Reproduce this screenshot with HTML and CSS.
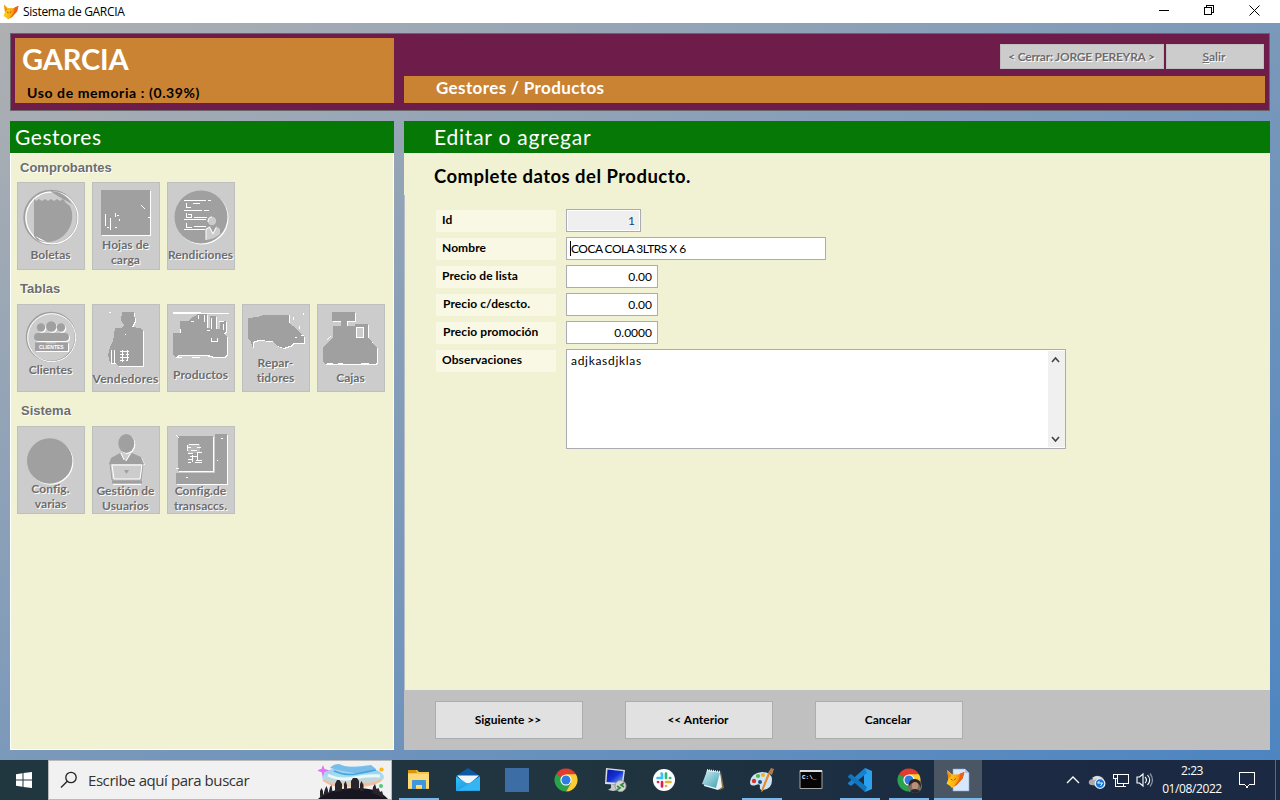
FILE: index.html
```html
<!DOCTYPE html>
<html lang="es">
<head>
<meta charset="utf-8">
<title>Sistema de GARCIA</title>
<link rel="stylesheet" href="styles.css">
</head>
<body>
<svg class="defs" width="0" height="0">
  <defs>
    <linearGradient id="foxg" x1="0" y1="0" x2="1" y2="0"><stop offset="0" stop-color="#ffd21a"/><stop offset=".55" stop-color="#fba90f"/><stop offset="1" stop-color="#e5571e"/></linearGradient>
    <linearGradient id="mailg" x1="0" y1="0" x2="1" y2="1"><stop offset="0" stop-color="#2fc3f5"/><stop offset="1" stop-color="#1a86dc"/></linearGradient>
    <linearGradient id="scr" x1="0" y1="0" x2="1" y2="1"><stop offset="0" stop-color="#0a16a0"/><stop offset=".5" stop-color="#1430d8"/><stop offset="1" stop-color="#7db4f5"/></linearGradient>
    <linearGradient id="note" x1="0" y1="0" x2="1" y2="1"><stop offset="0" stop-color="#cfeef2"/><stop offset="1" stop-color="#3e9fb2"/></linearGradient>
    <linearGradient id="sky" x1="0" y1="0" x2="0" y2="1"><stop offset="0" stop-color="#8cc9ee"/><stop offset=".45" stop-color="#a8dcf2"/><stop offset="1" stop-color="#f6c8a2"/></linearGradient>
    <symbol id="fox" viewBox="0 0 16 16"><path d="M1 .5 5 4l5 .2L15.500 2 14 7.500 9 13l-4 2.500-2-2L.5 12 2 8z" fill="url(#foxg)"/><path d="m12 3.300 3.500-1.300L14 7.500 9 13l-2.500 1.500 4.500-6z" fill="#e8601c"/><path d="m1 .5 3.500 5L2 8z" fill="#f08b12"/><path d="m4 8 1.500 1M8 7.500l-1 1.500" stroke="#91500a" stroke-width=".8"/></symbol>
    <symbol id="chrome" viewBox="0 0 24 24"><path d="M12 12 2.040 6.250A11.500 11.500 0 0 1 21.960 6.250z" fill="#e33b2e"/><path d="M2.040 6.250A11.500 11.500 0 0 0 12 23.500l5-8.600L12 12z" fill="#2ba24c"/><path d="M21.960 6.250A11.500 11.500 0 0 1 12 23.500l5-8.600L12 6.250z" fill="#fccd32"/><path d="M7 14.900 2.040 6.250 12 12z" fill="#2ba24c"/><circle cx="12" cy="12" r="5.600" fill="#fff"/><circle cx="12" cy="12" r="4.500" fill="#2f7de1"/></symbol>
  </defs>
</svg>

<header class="titlebar">
  <svg class="app-icon" width="16" height="16"><use href="#fox"/></svg>
  <span class="window-title">Sistema de GARCIA</span>
  <svg class="window-controls" width="120" height="23" viewBox="0 0 120 23" fill="none" stroke="#000" shape-rendering="crispEdges"><path d="M9 10.500h10"/><path d="M54.500 7.500h7v7h-7zM56.500 7V5.500h7v7H62"/><path d="m99.500 5.500 10 10m0-10-10 10" shape-rendering="auto"/></svg>
</header>

<main class="desktop">
  <section class="topbox">
    <div class="brand">
      <h1 class="brand-name">GARCIA</h1>
      <p class="brand-memory">Uso de memoria : (0.39%)</p>
    </div>
    <div class="top-right">
      <div class="session">
        <button class="gray-btn close-btn"><span>&lt; Cerrar: JORGE PEREYRA &gt;</span></button>
        <button class="gray-btn exit-btn"><span><u>S</u>alir</span></button>
      </div>
      <div class="crumb"><span>Gestores / Productos</span></div>
    </div>
  </section>

  <div class="columns">
    <aside class="sidebar">
      <h2 class="green-head side-head"><span>Gestores</span></h2>
      <div class="side-body">
        <h3 class="group-title"><span>Comprobantes</span></h3>
        <div class="tiles">
          <button class="tile"><svg class="tile-icon" viewBox="0 0 68 88"><circle cx="34" cy="35.500" r="26.800" fill="none" stroke="#a0a0a0" stroke-width="1.800"/><circle cx="35" cy="35.800" r="26" fill="none" stroke="#fff" stroke-width="1.300"/><path d="M17 17l2 2 3-2 3 2 3-2 3 2 3-2 3 2 3-2 3 2 3-2 3 4 4 3a25.500 25.500 0 0 1-33 34L17 54z" fill="#a0a0a0"/><path d="M33 9q14 0 22 13L44 16z" fill="#a0a0a0"/><path d="m18 54 12 6-7-2z" fill="#fff"/></svg><span class="tile-label y-66">Boletas</span></button>
          <button class="tile"><svg class="tile-icon" viewBox="0 0 68 88" shape-rendering="crispEdges"><path class="emb" d="M9 8h49v45H9z"/><path d="M13.500 32v12M18.500 36v12M23.500 31v4M27.500 37v2M15 45.500h2m6 0h2m0-12h2M49 23l4 4M56 35.500h3M14 53.500h5" stroke="#fff"/></svg><span class="tile-label y-56">Hojas de<br>carga</span></button>
          <button class="tile"><svg class="tile-icon" viewBox="0 0 68 88"><circle class="emb" cx="34" cy="35" r="26.500"/><path d="M17 18.500h22m2 0h3M17 28.500h18m2 0h5M17 37.500h22M17 47.500h21M19.500 21v4h4M26 21.500h7M19.500 31v4h5v-3h-4M19.500 41v4h5M27 35.500h13M27 44.500h12" stroke="#fff" fill="none" shape-rendering="crispEdges"/><circle cx="45" cy="39" r="4.200" fill="#ccc"/><path d="M39 58V47l4-3 3 7 3-7 4 3v5q-5 5-14 6" fill="#ccc"/><path d="M39 58V47l4-2m0 1 3 6 3-6M41 40q0-5 4-5" fill="none" stroke="#fff"/></svg><span class="tile-label y-66">Rendiciones</span></button>
        </div>
        <h3 class="group-title next"><span>Tablas</span></h3>
        <div class="tiles">
          <button class="tile"><svg class="tile-icon" viewBox="0 0 68 88"><circle cx="34" cy="33" r="24.500" fill="none" stroke="#a0a0a0" stroke-width="1.500"/><circle cx="34.700" cy="33.700" r="24" fill="none" stroke="#fff"/><g class="emb"><circle cx="24" cy="23.500" r="4.200"/><circle cx="34.300" cy="22.500" r="5.200"/><circle cx="44" cy="23.500" r="4.200"/><rect x="17" y="29" width="35" height="8" rx="4"/><path d="M18 38.500h10l2 1h8l2-1h11V47H18z"/></g><text x="34.300" y="45" class="mini">CLIENTES</text></svg><span class="tile-label y-59">Clientes</span></button>
          <button class="tile"><svg class="tile-icon" viewBox="0 0 68 88" shape-rendering="crispEdges"><path class="emb" d="M30 8h12l1 9-3 6 8 1 3 3v35H27l-4-3h-5l-2-8 2-8 3-6 2-13h6l3-3-3-5z"/><path d="M19.500 59V46m3 14V46M28 47.500h9m-9 3h4m2 0h3m-9 3h9m-9 3h4m2 0h2M30.500 46v12m5-12v10M17 8.500h2M33 30.500h1" stroke="#fff"/></svg><span class="tile-label vend y-68">Vendedores</span></button>
          <button class="tile"><svg class="tile-icon" viewBox="0 0 68 88" shape-rendering="crispEdges"><path d="M6 9.500h56M6 8.500h28" stroke="#fff"/><path class="emb" d="M6 29h7V17h8l3-3 4-2 3-2h9v14h3V12h6v13h4v-8h6v10l-2 3 3 3v18l-3 2H45l-3-2H12l-3 2-3-2z"/><path d="M24 17h3m4-6v4m6-4v7m7-4v11m8-8h5M44 34v3h6v-3M13 25v4M9 53.500h6m10 0h8m8-1h5M56 20v6m-16 0h3" fill="none" stroke="#fff"/></svg><span class="tile-label y-64">Productos</span></button>
          <button class="tile"><svg class="tile-icon" viewBox="0 0 68 88" shape-rendering="crispEdges"><path class="emb" d="m6 14 10-1 5-2h26v8l4 3 5 5 6 6v6H51l-3 3-7 2-5-2-6-5-14-1-5 2v7l-2-7-3-3z"/><path d="M51 13v3M61.500 9v2M47.500 11v8M57 22v3m-4 8h2M59 31h3" stroke="#fff"/></svg><span class="tile-label y-52">Repar-<br>tidores</span></button>
          <button class="tile"><svg class="tile-icon" viewBox="0 0 68 88" shape-rendering="crispEdges"><path class="emb" d="M15 8h23v9h-8v5h8v-2h13v13l9 11v14l-2 2H8l-2-3V43l10-10V22h8v-5h-9z"/><path d="M39.500 23.500h7v10h-7z" fill="#ccc" stroke="#fff"/><path d="M10 36l4-4M10 59.500h6m5 0h5m18 0h8" stroke="#fff"/></svg><span class="tile-label y-67">Cajas</span></button>
        </div>
        <h3 class="group-title next sys"><span>Sistema</span></h3>
        <div class="tiles">
          <button class="tile"><svg class="tile-icon" viewBox="0 0 68 88"><circle class="emb" cx="32.700" cy="35" r="22.700"/></svg><span class="tile-label y-56">Config.<br>varias</span></button>
          <button class="tile"><svg class="tile-icon" viewBox="0 0 68 88"><g class="emb"><ellipse cx="34.300" cy="17.500" rx="8" ry="9.500"/><path d="m17 38 2-6 9-5 6 8 6-8 9 4 3 7z"/></g><path d="m29 27 3 7m6-6-4 7" stroke="#fff" fill="none"/><path d="M18 37.500h33L49 54H20z" fill="#ccc" stroke="#a0a0a0"/><path d="M20 39h30l-2 14H22z" fill="none" stroke="#fff"/><path d="M20 54.500h30v3H20z" fill="#a0a0a0"/><path d="M21 58.500h28" stroke="#fff"/><path d="M32 44h5l-2.500 4z" fill="#a0a0a0"/></svg><span class="tile-label y-58">Gestión de<br>Usuarios</span></button>
          <button class="tile"><svg class="tile-icon" viewBox="0 0 68 88" shape-rendering="crispEdges"><g class="emb"><path d="M11 10h35v35H11z"/><path d="M48 8h12v50H9V47h39z"/></g><path d="M21 18h12v9H21z" fill="#b6b6b6"/><path d="M22 18.500h10M20 21.500h4m6 0h4M24 24.500h6m-9 3h5m4-1h5M23 30.500h8m-10 3h5m3 1h6M21 36.500h3m4 0h7M20.500 19v6m5 4v7m5-10v8M9 9l3 3M54 12h2M19 51h2M9 42h3M50 34h1" stroke="#fff"/></svg><span class="tile-label y-58">Config.de<br>transaccs.</span></button>
        </div>
      </div>
    </aside>

    <section class="content">
      <h2 class="green-head content-head"><span>Editar o agregar</span></h2>
      <div class="form-area">
        <p class="form-title"><span>Complete datos del Producto.</span></p>
        <div class="form">
          <div class="row"><label class="lbl l-id">Id</label><div class="field f-id">1</div></div>
          <div class="row"><label class="lbl l-nom">Nombre</label><div class="field f-name"><i class="caret"></i><span>COCA COLA 3LTRS X 6</span></div></div>
          <div class="row"><label class="lbl l-lista">Precio de lista</label><div class="field f-num">0.00</div></div>
          <div class="row"><label class="lbl l-desc">Precio c/descto.</label><div class="field f-num">0.00</div></div>
          <div class="row"><label class="lbl l-prom">Precio promoción</label><div class="field f-num">0.0000</div></div>
          <div class="row"><label class="lbl l-obs">Observaciones</label>
            <div class="memo"><span class="memo-text">adjkasdjklas</span>
              <div class="scroll"><svg width="16" height="16" viewBox="0 0 16 16"><path d="m4 11 3.500-4 3.500 4" fill="none" stroke="#444" stroke-width="1.600"/></svg><svg width="16" height="16" viewBox="0 0 16 16"><path d="m4 6 3.500 4L11 6" fill="none" stroke="#444" stroke-width="1.600"/></svg></div>
            </div>
          </div>
        </div>
      </div>
      <footer class="actions">
        <button class="act"><span>Siguiente &gt;&gt;</span></button>
        <button class="act"><span>&lt;&lt; Anterior</span></button>
        <button class="act"><span>Cancelar</span></button>
      </footer>
    </section>
  </div>
</main>

<nav class="taskbar">
  <div class="start"><svg width="16" height="16" viewBox="0 0 16 16" fill="#fff"><path d="m0 2.200 6.500-.9v6.200H0zM7.500 1.100 16 0v7.500H7.500zM0 8.500h6.500v6.200L0 13.800zM7.500 8.500H16V16l-8.500-1.100z"/></svg></div>
  <div class="search">
    <svg width="18" height="18" viewBox="0 0 18 18" fill="none" stroke="#222" stroke-width="1.300"><circle cx="11" cy="6.500" r="5.200"/><path d="M7.300 10.200 1 16.500"/></svg>
    <span class="search-text">Escribe aquí para buscar</span>
    <svg class="search-art" width="70" height="36" viewBox="0 0 70 36">
      <ellipse cx="35" cy="14" rx="31" ry="10.500" fill="url(#sky)"/>
      <path d="M12 5q3-4 9-4 8 4 16 3t16-2l5 4q-10 6-22 4T12 5" fill="#79bce9"/>
      <path d="M10 12q12 6 26 3t26-2" fill="none" stroke="#eaf8fb" stroke-width="3"/>
      <path d="M16 8q12 5 22 3t20-4" fill="none" stroke="#42a5dc" stroke-width="1.500"/>
      <path d="M5 17q10 7 18 5m22-1q10 1 18-4" fill="none" stroke="#f3bb9b" stroke-width="2"/>
      <path d="M0 36q10-10 35-11t35 11z" fill="#171520"/>
      <path d="M2 34v-6l1.500-3 1.500 3v5l2-7 1.500-3 1.500 4v5l2-8 1.500-2 1 7zM17 29v-8l2-4 2.500 0 2.500 4v7zM26 27v-6l1.500-3 1.500 4v5zM33 26v-8l2-3h4l2 3v9zM42 28v-7l1.500-3 2 4v6zM54 30l1-6 2-3 1.500 5 2-1 1.500 4 2-1 1.500 5v2z" fill="#29232c"/>
      <path d="M5 4 6 6.500l3 1-3 1-1 3-1-3-3-1 3-1z" fill="#df73f5" stroke="#df73f5" stroke-width="1.400"/><circle cx="63.500" cy="6.500" r="2.100" fill="#fab41d"/><circle cx="63" cy="23" r="2" fill="#49cf70"/>
    </svg>
  </div>
  <div class="apps">
    <div class="app open"><svg width="24" height="24" viewBox="0 0 24 24"><path d="M1 2h9l2 2h10v17H1z" fill="#f8c44b"/><path d="M1 2h8l1 3H1z" fill="#d99512"/><path d="M1 6h21v14H1z" fill="#fdda75"/><path d="M5 13q0-1 1-1h12q1 0 1 1v8h-4v-4H9v4H5z" fill="#3e96db"/></svg></div>
    <div class="app"><svg width="24" height="24" viewBox="0 0 24 24"><path d="M0 8 12 0l12 8v4H0z" fill="#0c59a4"/><path d="M1 7.500h22l-9 8H9z" fill="#f2f6fb"/><path d="M0 8.500 12 16l12-7.500V23H0z" fill="url(#mailg)"/><path d="m24 8.500-22 14H24z" fill="#35b6f3"/></svg></div>
    <div class="app"><svg width="24" height="24"><path d="M0 0h24v24H0z" fill="#3c6ea5"/></svg></div>
    <div class="app"><svg width="24" height="24"><use href="#chrome"/></svg></div>
    <div class="app"><svg width="24" height="24" viewBox="0 0 24 24"><path d="m3 0 19 2-2 15-18-1z" fill="#d9dde0"/><path d="m4.500 1.500 16 1.700-1.700 12L3.500 14z" fill="url(#scr)"/><path d="m8 16 6 1 1 5-5 1-5-1 3-2z" fill="#c7cacc"/><circle cx="17.500" cy="18" r="5.500" fill="#d5d8d4" stroke="#9a9e9b"/><path d="m14 18 3 2-3 2m7-7-3 2 3 2" stroke="#328a35" stroke-width="1.700" fill="none"/></svg></div>
    <div class="app"><svg width="24" height="24" viewBox="0 0 24 24" fill="none" stroke-width="2.700" stroke-linecap="round"><circle cx="12" cy="12" r="11" fill="#fff"/><path d="M10 6v4H5.500M9.500 5.500h.1" stroke="#36c5f0"/><path d="M14 5.500V10m4 0h.2" stroke="#2eb67d"/><path d="M14 14h4.500M14 18h.1" stroke="#ecb22e"/><path d="M10 14v4.500M6 14h.1" stroke="#e01e5a"/></svg></div>
    <div class="app"><svg width="24" height="24" viewBox="0 0 24 24"><path d="m20 4 3 16-4 2-3-2z" fill="#8a703d"/><path d="m6 2 13 2 2 15-4 3-14-4z" fill="#eaf3f4"/><path d="m6 3 13 1.500L15 20 1 16z" fill="url(#note)"/><path d="m6 2 14 2" stroke="#f5f5f5" stroke-width="2" stroke-dasharray="1 1"/></svg></div>
    <div class="app open"><svg width="24" height="24" viewBox="0 0 24 24"><path d="M0 14Q1 5 12 4q10 0 10 8 0 9-9 10-4 0-3-4 0-3-4-1-6 2-6-3z" fill="#cfe5f6"/><circle cx="4" cy="13" r="2.200" fill="#d6372a"/><circle cx="8" cy="8" r="2.100" fill="#50b848"/><circle cx="13" cy="7" r="2" fill="#efb41f"/><circle cx="10" cy="14" r="2" fill="#205184"/><path d="m20 6-7 17-2 1 1-4 6-15z" fill="#e48b2c"/><path d="m18 5 3-5 3 1-2 6z" fill="#b47a4a"/></svg></div>
    <div class="app"><svg class="cmd-icon" width="24" height="24" viewBox="0 0 24 24"><path d="M1 2.500h22v18H1z" fill="#050505" stroke="#a7a7a7"/><path d="M1 2h22v2H1z" fill="#ddd"/><text x="3" y="10.500" class="cmd">C:\_</text></svg></div>
    <div class="app open"><svg width="24" height="24" viewBox="0 0 24 24"><path d="m17 0 7 3v18l-7 3-1-5V6z" fill="#2ca1ed"/><path d="m17 0 2 5L3 18l-3-2v-1z" fill="#1783ce"/><path d="m17 24 2-5L3 6 0 8v1z" fill="#1376bd"/></svg></div>
    <div class="app open"><svg class="profile" width="26" height="26" viewBox="0 0 26 26"><use href="#chrome" width="24" height="24"/><circle cx="18" cy="18" r="7" fill="#796b61"/><path d="M12 18q-1-7 6-7 7 1 6 9-3-7-6-5-3-1-6 3" fill="#2b2524"/><ellipse cx="18" cy="18" rx="3.200" ry="4" fill="#b98f78"/><path d="M13 23q5-4 10 0-5 4-10 0" fill="#252a30"/></svg></div>
    <div class="app open active"><svg width="24" height="24" viewBox="0 0 24 24"><path d="M7 1h12l4 4v18H7z" fill="#d7e7fb" stroke="#7fa6d4" stroke-width=".6"/><path d="M19 1v4h4" fill="#a9c8ee"/><use href="#fox" x="0" y="1" width="19" height="20"/></svg></div>
  </div>
  <div class="tray">
    <svg class="tray-icons" width="90" height="24" viewBox="0 0 90 24" fill="none" stroke="#fff" stroke-width="1.300"><path d="m2 15 6-6 6 6"/><path d="M26 17q-3-1-2-4 1-2 4-2 2-4 6-3 5 1 5 5l-5 5z" fill="#aaa" stroke="none"/><path d="M28 11q4-3 8 0" stroke="#ddd" stroke-width="3"/><circle cx="35" cy="15.500" r="4.800" fill="#1773ce" stroke="#dcecff"/><path d="m32.500 15 2-2m-2 2h5l-2 3" stroke-width="1"/><g shape-rendering="crispEdges" stroke-width="1"><path d="M52.500 6.500h11v9h-11v-5M48.500 6.500h4v4h-4zM50.500 10v8h10M58.500 15v3"/></g><path d="M72 9h2.500L78 6v12l-3.500-3H72zM80 9q3 3 0 6M82.500 7q4.500 5 0 10" stroke-width="1.100"/><path d="M85 5.500q5 6.500 0 13" stroke="#8592a0"/></svg>
    <div class="clock"><span class="time">2:23</span><span class="date">01/08/2022</span></div>
    <svg class="notif" width="18" height="18" viewBox="0 0 18 18" fill="none" stroke="#fff" shape-rendering="crispEdges"><path d="M1.500 1.500h15v12h-5l-2.500 3-2.500-3h-5z"/></svg>
    <div class="peek"></div>
  </div>
</nav>
</body>
</html>
```
FILE: styles.css
```css
* { box-sizing: border-box; }
body {
  margin: 0;
  width: 1280px;
  height: 800px;
  display: flex;
  flex-direction: column;
  overflow: hidden;
  font-family: Lato, "Noto Sans", sans-serif;
  color: #000;
}
h1, h2, h3, p { margin: 0; font-weight: normal; }
button { margin: 0; padding: 0; border: 0; border-radius: 0; font-family: inherit; color: inherit; }
span { white-space: nowrap; }
.defs { flex: none; display: block; width: 0; height: 0; }

/* window title bar */
.titlebar { height: 23px; flex: none; display: flex; align-items: center; background: #fff; padding-left: 3px; }
.window-title { font: 12px/22px "Open Sans", sans-serif; letter-spacing: -0.3px; margin-left: 4px; }
.window-controls { margin-left: auto; margin-right: 10px; }
.app-icon { flex: none; }

/* wallpaper */
.desktop {
  flex: 1;
  min-height: 0;
  padding: 10px;
  display: flex;
  flex-direction: column;
  gap: 10px;
  background: linear-gradient(to bottom right, #aeb0b2 0%, #7b99ba 50%, #4d85c1 100%);
}

/* top box */
.topbox { height: 78px; flex: none; display: flex; gap: 10px; padding: 4px; border: 1px solid #6b6468; background: #6e1c4a; }
.brand { width: 379px; height: 65px; background: #c98333; color: #fff; padding: 0 0 0 7px; }
.brand-name { font-size: 29px; line-height: 41px; font-weight: 700; letter-spacing: -0.1px; }
.brand-memory { color: #000; font-size: 14px; line-height: 20px; font-weight: 700; letter-spacing: 0.6px; margin: 4px 0 0 5px; }
.top-right { flex: 1; }
.session { display: flex; gap: 2px; justify-content: flex-end; height: 38px; padding: 6px 1px 0 0; }
.gray-btn { height: 25px; background: #ccc; border: 1px solid #bfbfbf; color: #6d6d6d; text-shadow: 1px 1px 0 #fff; font-size: 12px; font-weight: 700; }
.close-btn { width: 164px; letter-spacing: -0.24px; padding-right: 1px; }
.exit-btn { width: 98px; padding-right: 2px; }
.crumb { height: 27px; background: #c98333; color: #fff; padding-left: 32px; font-size: 17px; line-height: 24px; font-weight: 700; letter-spacing: 0.38px; }

/* columns */
.columns { flex: 1; min-height: 0; display: flex; gap: 10px; }
.green-head { height: 32px; flex: none; background: #067806; color: #fff; font-size: 21px; line-height: 31px; }
.sidebar { width: 384px; display: flex; flex-direction: column; }
.side-head { padding-left: 5px; letter-spacing: 0.55px; }
.side-body { flex: 1; background: #f1f2d3; border: 1px solid #fff; padding-left: 6px; }
.group-title { height: 28px; padding-left: 3px; color: #6d6d6d; font: 700 13px/27px "Liberation Sans", sans-serif; text-shadow: 1px 1px 0 #fff; }
.group-title.next { height: 34px; line-height: 38px; }
.group-title.sys { padding-left: 4px; }
.tiles { display: flex; gap: 7px; }
.tile { width: 68px; height: 88px; flex: none; display: grid; background: #ccc; box-shadow: inset 0 0 0 1px #bfbfbf; color: #6d6d6d; }
.tile-icon { grid-area: 1 / 1; width: 68px; height: 88px; display: block; }
.tile-label { grid-area: 1 / 1; align-self: start; justify-self: center; text-align: center; padding-right: 1px; font-size: 12px; line-height: 15px; font-weight: 700; letter-spacing: 0.05px; text-shadow: 1px 1px 0 #fff; z-index: 1; }
.vend { letter-spacing: 0.25px; }
.y-52 { margin-top: 51px; }
.y-56 { margin-top: 55px; }
.y-58 { margin-top: 57px; }
.y-59 { margin-top: 58px; }
.y-64 { margin-top: 63px; }
.y-66 { margin-top: 65px; }
.y-67 { margin-top: 66px; }
.y-68 { margin-top: 67px; }
.emb { fill: #a0a0a0; filter: drop-shadow(1px 1px 0 #fff); }
.mini { font: 700 5px "Liberation Sans", sans-serif; fill: #fff; text-anchor: middle; }

/* form */
.content { flex: 1; display: flex; flex-direction: column; }
.content-head { padding-left: 30px; letter-spacing: 0.78px; }
.form-area { flex: 1; background: linear-gradient(#b5bcc4, #b5bcc4) 0 42px / 1px 100% no-repeat #f1f2d3; padding: 10px 0 0 30px; }
.form-title { font-size: 18.500px; line-height: 26px; font-weight: 700; letter-spacing: 0.47px; }
.form { display: flex; flex-direction: column; gap: 5px; padding: 20px 0 0 2px; }
.row { display: flex; align-items: flex-start; gap: 10px; }
.lbl { width: 120px; height: 22px; margin-top: 1px; padding-left: 6px; background: #f9f8e4; font-size: 12px; line-height: 20px; font-weight: 700; white-space: nowrap; letter-spacing: 0.08px; }
.l-desc, .l-prom { padding-left: 7px; }
.field { height: 23px; background: #fff; border: 1px solid #ababb2; font-size: 12px; line-height: 22px; text-align: right; padding: 0 5px; white-space: nowrap; }
.f-id { width: 75px; background: #efefef; box-shadow: inset 0 0 0 1px #fff; color: #1c3f7c; }
.f-name { width: 260px; display: flex; text-align: left; padding-left: 3px; letter-spacing: -0.53px; }
.caret { width: 1px; height: 15px; background: #000; margin-top: 3px; }
.f-num { width: 92px; }
.memo { width: 500px; height: 100px; background: #fff; border: 1px solid #ababb2; display: flex; justify-content: space-between; }
.memo-text { font-size: 12px; line-height: 22px; padding-left: 4px; letter-spacing: 0.7px; }
.scroll { width: 17px; height: 96px; margin: 1px 0 1px 1px; background: #f0f0f0; display: flex; flex-direction: column; justify-content: space-between; }
.actions { height: 60px; flex: none; display: flex; gap: 42px; padding: 11px 0 0 31px; background: #c0c0c0; }
.act { width: 148px; height: 38px; background: #e1e1e1; border: 1px solid #adadad; font-size: 12px; font-weight: 700; padding: 0 2px 2px 0; }

/* taskbar */
.taskbar { height: 40px; flex: none; display: flex; background: linear-gradient(90deg, #20373f 0%, #20353f 45%, #1b2b42 75%, #1b2942 100%); font-family: "Open Sans", sans-serif; }
.start { width: 48px; display: flex; align-items: center; justify-content: center; }
.search { width: 344px; background: #f1f1f1; border: 1px solid #b9b9b9; display: flex; align-items: center; padding-left: 11px; }
.search-text { font-size: 15px; letter-spacing: -0.43px; color: #333; margin-left: 10px; }
.search-art { margin: 2px 3px 0 auto; }
.apps { display: flex; margin-left: 3px; }
.app { width: 48px; height: 40px; margin-right: 1px; display: flex; align-items: center; justify-content: center; }
.open { background: linear-gradient(#76b9ed, #76b9ed) 50% 100% / 40px 2px no-repeat; }
.active { background-color: #4a5664; background-size: 48px 2px; }
.cmd-icon { margin-right: 1px; }
.profile { margin: 2px 0 0 2px; }
.cmd { font: 700 6px "Liberation Mono", monospace; fill: #fff; }
.tray { margin-left: auto; display: flex; align-items: center; color: #fff; }
.clock { width: 74px; display: flex; flex-direction: column; align-items: center; font-size: 12px; line-height: 18px; letter-spacing: -0.4px; }
.notif { margin: 0 19px 0 9px; }
.peek { width: 5px; height: 40px; border-left: 1px solid #5f6b7d; }
```
